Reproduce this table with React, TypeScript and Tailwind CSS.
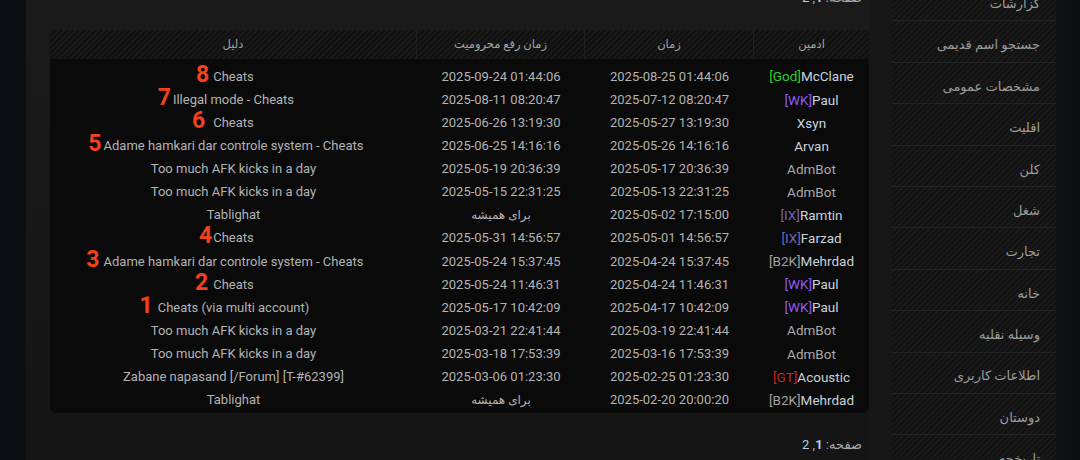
import React from 'react';

type Row = {
  tag?: string;
  tagColor?: string;
  name: string;
  nameColor: string;
  time: string;
  unban: string;
  reason: string;
  num?: string;
  numGap?: string;
};

const NAME = 'text-[#c9d3dd]';
const BOT = 'text-[#a9a9a9]';

const rows: Row[] = [
  { tag: '[God]', tagColor: 'text-[#2fcc2f]', name: 'McClane', nameColor: NAME, time: '2025-08-25 01:44:06', unban: '2025-09-24 01:44:06', reason: 'Cheats', num: '8', numGap: 'mr-[4px]' },
  { tag: '[WK]', tagColor: 'text-[#8f5cf7]', name: 'Paul', nameColor: NAME, time: '2025-07-12 08:20:47', unban: '2025-08-11 08:20:47', reason: 'Illegal mode - Cheats', num: '7', numGap: 'mr-[2px]' },
  { name: 'Xsyn', nameColor: NAME, time: '2025-05-27 13:19:30', unban: '2025-06-26 13:19:30', reason: 'Cheats', num: '6', numGap: 'mr-[8px]' },
  { name: 'Arvan', nameColor: NAME, time: '2025-05-26 14:16:16', unban: '2025-06-25 14:16:16', reason: 'Adame hamkari dar controle system - Cheats', num: '5', numGap: 'mr-[2px]' },
  { name: 'AdmBot', nameColor: BOT, time: '2025-05-17 20:36:39', unban: '2025-05-19 20:36:39', reason: 'Too much AFK kicks in a day' },
  { name: 'AdmBot', nameColor: BOT, time: '2025-05-13 22:31:25', unban: '2025-05-15 22:31:25', reason: 'Too much AFK kicks in a day' },
  { tag: '[IX]', tagColor: 'text-[#6f66b8]', name: 'Ramtin', nameColor: NAME, time: '2025-05-02 17:15:00', unban: 'برای همیشه', reason: 'Tablighat' },
  { tag: '[IX]', tagColor: 'text-[#6f66b8]', name: 'Farzad', nameColor: NAME, time: '2025-05-01 14:56:57', unban: '2025-05-31 14:56:57', reason: 'Cheats', num: '4', numGap: 'mr-[1px]' },
  { tag: '[B2K]', tagColor: 'text-[#a3a3a3]', name: 'Mehrdad', nameColor: NAME, time: '2025-04-24 15:37:45', unban: '2025-05-24 15:37:45', reason: 'Adame hamkari dar controle system - Cheats', num: '3', numGap: 'mr-[4px]' },
  { tag: '[WK]', tagColor: 'text-[#8f5cf7]', name: 'Paul', nameColor: NAME, time: '2025-04-24 11:46:31', unban: '2025-05-24 11:46:31', reason: 'Cheats', num: '2', numGap: 'mr-[5px]' },
  { tag: '[WK]', tagColor: 'text-[#8f5cf7]', name: 'Paul', nameColor: NAME, time: '2025-04-17 10:42:09', unban: '2025-05-17 10:42:09', reason: 'Cheats (via multi account)', num: '1', numGap: 'mr-[5px]' },
  { name: 'AdmBot', nameColor: BOT, time: '2025-03-19 22:41:44', unban: '2025-03-21 22:41:44', reason: 'Too much AFK kicks in a day' },
  { name: 'AdmBot', nameColor: BOT, time: '2025-03-16 17:53:39', unban: '2025-03-18 17:53:39', reason: 'Too much AFK kicks in a day' },
  { tag: '[GT]', tagColor: 'text-[#c92424]', name: 'Acoustic', nameColor: NAME, time: '2025-02-25 01:23:30', unban: '2025-03-06 01:23:30', reason: 'Zabane napasand [/Forum] [T-#62399]' },
  { tag: '[B2K]', tagColor: 'text-[#a3a3a3]', name: 'Mehrdad', nameColor: NAME, time: '2025-02-20 20:00:20', unban: 'برای همیشه', reason: 'Tablighat' },
];

const menu = [
  'گزارشات',
  'جستجو اسم قدیمی',
  'مشخصات عمومی',
  'اقلیت',
  'کلن',
  'شغل',
  'تجارت',
  'خانه',
  'وسیله نقلیه',
  'اطلاعات کاربری',
  'دوستان',
  'تاریخچه',
];

function Pager() {
  return (
    <div dir="rtl" className="text-right text-[13px] leading-[16px] text-[#a9a9a9] pr-[7px]">
      صفحه: <a className="font-bold text-[#b9cde0]">1</a>, <a className="text-[#b9cde0]">2</a>
    </div>
  );
}

export default function App() {
  return (
    <div
      className="w-[1080px] h-[460px] overflow-hidden flex bg-[#171717] text-[13px] text-[#b3b3b3]"
      style={{ fontFamily: 'Roboto, "DejaVu Sans", sans-serif' }}
    >
      <div className="w-[26px] shrink-0 bg-[#0b0e12]" />

      <main className="w-[843px] shrink-0 pl-[24px] flex flex-col bg-[linear-gradient(180deg,#1a1a1a,#151515)]">
        <div className="-mt-[10px] h-[16px] mb-[24px]">
          <Pager />
        </div>

        <div className="w-[819px] rounded-[6px] overflow-hidden bg-[#0a0a0a]">
          <div className="grid grid-cols-[367px_168px_169px_115px] h-[29px] text-[11.5px] text-[#a3a3a3] bg-[repeating-linear-gradient(-45deg,#181818_0px,#181818_2px,#101010_2px,#101010_4px)]">
            <div className="flex items-center justify-center border-r border-[#202020]">دلیل</div>
            <div className="flex items-center justify-center border-r border-[#202020]">زمان رفع محرومیت</div>
            <div className="flex items-center justify-center border-r border-[#202020]">زمان</div>
            <div className="flex items-center justify-center">ادمین</div>
          </div>

          <div className="pt-[6px] pb-[2px]">
            {rows.map((r, i) => (
              <div key={i} className="grid grid-cols-[367px_168px_169px_115px] h-[23.1px] items-center text-center whitespace-nowrap">
                <div>
                  <span className="relative">
                    {r.num && (
                      <span className={`absolute right-full bottom-[-2px] ${r.numGap} text-[23px] font-bold leading-none text-[#f2411b]`}>
                        {r.num}
                      </span>
                    )}
                    {r.reason}
                  </span>
                </div>
                <div className={r.unban.startsWith('2') ? '' : 'text-[12px]'}>{r.unban}</div>
                <div>{r.time}</div>
                <div className="text-[13.5px]">
                  {r.tag && <span className={r.tagColor}>{r.tag}</span>}
                  <span className={r.nameColor}>{r.name}</span>
                </div>
              </div>
            ))}
          </div>
        </div>

        <div className="mt-[24px]">
          <Pager />
        </div>
      </main>

      <div className="w-[23px] shrink-0 bg-[#171717]" />

      <aside className="w-[164px] shrink-0 bg-[repeating-linear-gradient(-45deg,#191919_0px,#191919_2px,#121212_2px,#121212_4px)]">
        <div className="-mt-[20px]">
          {menu.map((m, i) => (
            <div
              key={i}
              dir="rtl"
              className="h-[41.4px] flex items-center pr-[16px] pt-[7px] border-b border-[#242424] text-[13px] text-[#9c9c9c]"
            >
              {m}
            </div>
          ))}
        </div>
      </aside>

      <div className="w-[24px] shrink-0 bg-[linear-gradient(90deg,#101215,#0c0e11)]" />
    </div>
  );
}
